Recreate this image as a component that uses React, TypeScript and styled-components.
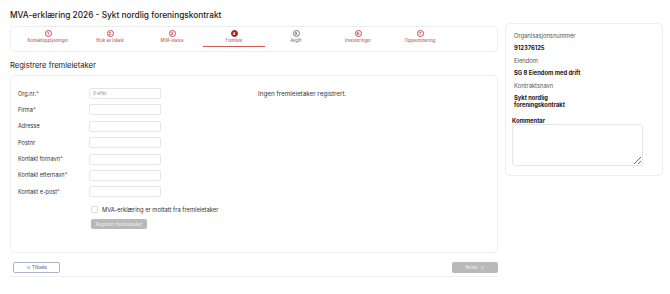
import React from "react";
import styled, { createGlobalStyle } from "styled-components";
import { ChevronsLeft, ChevronsRight } from "lucide-react";

const GlobalStyle = createGlobalStyle`
  body {
    margin: 0;
    background: #ffffff;
    font-family: Inter, "Noto Sans", Arial, sans-serif;
    color: #222;
  }
`;

const Page = styled.div`
  display: flex;
  align-items: flex-start;
  gap: 7px;
  padding: 0 6px 0 10px;
`;

const Main = styled.div`
  flex: 0 0 488px;
  width: 488px;
  padding-top: 9px;
`;

const Title = styled.h1`
  margin: 0;
  font-size: 8.3px;
  line-height: 12px;
  font-weight: 500;
  color: #1c1c1c;
`;

const Stepper = styled.div`
  margin-top: 5px;
  height: 24px;
  border: 1px solid #eeeeee;
  border-radius: 5px;
  display: flex;
  align-items: flex-start;
  padding-left: 6px;
`;

const Step = styled.div<{ $active?: boolean }>`
  width: 62px;
  display: flex;
  flex-direction: column;
  align-items: center;
  padding: 3px 0 2px;
  border-bottom: 1px solid ${(p) => (p.$active ? "#d0574f" : "transparent")};
`;

const Circle = styled.div<{ $active?: boolean; $muted?: boolean }>`
  width: 7px;
  height: 7px;
  border-radius: 50%;
  box-sizing: border-box;
  border: 0.6px solid ${(p) => (p.$muted ? "#777" : p.$active ? "#9e2424" : "#c24848")};
  background: ${(p) => (p.$active ? "#9e2424" : "#fff")};
  color: ${(p) => (p.$active ? "#fff" : p.$muted ? "#555" : "#b73a3a")};
  font-size: 3.8px;
  font-weight: 700;
  display: flex;
  align-items: center;
  justify-content: center;
  margin-bottom: 1px;
`;

const StepLabel = styled.div<{ $muted?: boolean }>`
  font-size: 4.2px;
  line-height: 6px;
  color: ${(p) => (p.$muted ? "#666" : "#b73a3a")};
  white-space: nowrap;
`;

const Heading = styled.h2`
  margin: 8px 0 3px;
  font-size: 7.6px;
  line-height: 12px;
  font-weight: 400;
  color: #222;
`;

const FormCard = styled.div`
  height: 164px;
  border: 1px solid #eeeeee;
  border-radius: 5px;
  padding: 12px 7px 0;
  display: grid;
  grid-template-columns: 240px 1fr;
`;

const Form = styled.div`
  display: flex;
  flex-direction: column;
  gap: 5.4px;
`;

const Row = styled.div`
  display: flex;
  align-items: center;
`;

const Label = styled.label`
  width: 71px;
  font-size: 5.6px;
  color: #333;
`;

const Req = styled.span`
  color: #c0392b;
`;

const Input = styled.input`
  width: 72px;
  height: 11px;
  box-sizing: border-box;
  border: 1px solid #e6e6e6;
  border-radius: 2px;
  padding: 0 3px;
  font-size: 4.2px;
  font-family: inherit;
  &::placeholder {
    color: #888;
  }
`;

const Extras = styled.div`
  margin: 9px 0 0 73px;
  display: flex;
  flex-direction: column;
  align-items: flex-start;
  gap: 6px;
`;

const CheckRow = styled.label`
  display: flex;
  align-items: center;
  gap: 4px;
  font-size: 5.8px;
  color: #333;
`;

const CheckBox = styled.span`
  width: 5px;
  height: 5px;
  border: 0.6px solid #ddd;
  border-radius: 1px;
`;

const GreyButton = styled.button`
  border: none;
  border-radius: 2px;
  background: #b9b9b9;
  color: #f2f2f2;
  font-family: inherit;
  font-size: 4.3px;
  padding: 0 5px;
  height: 10px;
  display: inline-flex;
  align-items: center;
  gap: 2px;
`;

const Message = styled.div`
  font-size: 6.3px;
  color: #333;
  padding-top: 2px;
`;

const Footer = styled.div`
  margin-top: 9px;
  display: flex;
  justify-content: space-between;
  align-items: center;
  padding: 0 0 3px 3px;
  border-bottom: 1px solid #f0f0f0;
`;

const BackButton = styled.button`
  width: 47px;
  height: 11px;
  box-sizing: border-box;
  border: 1px solid #a9b6c9;
  border-radius: 2px;
  background: #fff;
  color: #3d5a86;
  font-family: inherit;
  font-size: 4.5px;
  display: inline-flex;
  align-items: center;
  justify-content: center;
  gap: 1px;
`;

const NextButton = styled(GreyButton)`
  width: 46px;
  height: 11px;
  justify-content: center;
  font-size: 4.6px;
`;

const Sidebar = styled.aside`
  flex: 0 0 158px;
  margin-top: 23px;
  width: 158px;
  height: 153px;
  box-sizing: border-box;
  border: 1px solid #eeeeee;
  border-radius: 5px;
  padding: 8px 0 0 6px;
`;

const Info = styled.div`
  padding-left: 2px;
  max-width: 82px;
`;

const InfoLabel = styled.div`
  font-size: 5.8px;
  line-height: 7px;
  color: #555;
  margin-bottom: 5px;
`;

const InfoValue = styled.div`
  font-size: 5.8px;
  line-height: 7px;
  font-weight: 700;
  color: #1a1a1a;
  margin-bottom: 6px;
`;

const CommentLabel = styled.div`
  margin-top: 9px;
  font-size: 5.8px;
  line-height: 7px;
  font-weight: 700;
  color: #1a1a1a;
`;

const TextArea = styled.textarea`
  display: block;
  width: 131px;
  height: 42px;
  box-sizing: border-box;
  border: 1px solid #e6e6e6;
  border-radius: 3px;
  resize: vertical;
`;

const steps = [
  "Kontaktopplysninger",
  "Bruk av lokale",
  "MVA-status",
  "Fremleie",
  "Avgift",
  "Investeringer",
  "Oppsummering",
];

const fields = [
  { label: "Org.nr.", required: true, placeholder: "9 siffer" },
  { label: "Firma", required: true },
  { label: "Adresse" },
  { label: "Postnr" },
  { label: "Kontakt fornavn", required: true },
  { label: "Kontakt etternavn", required: true },
  { label: "Kontakt e-post", required: true },
];

export default function App() {
  const active = 3;
  return (
    <>
      <GlobalStyle />
      <Page>
        <Main>
          <Title>MVA-erklæring 2026 - Sykt nordlig foreningskontrakt</Title>
          <Stepper>
            {steps.map((s, i) => (
              <Step key={s} $active={i === active}>
                <Circle $active={i === active} $muted={i === 4}>
                  {i + 1}
                </Circle>
                <StepLabel $muted={i === 4}>{s}</StepLabel>
              </Step>
            ))}
          </Stepper>
          <Heading>Registrere fremleietaker</Heading>
          <FormCard>
            <div>
              <Form>
                {fields.map((f) => (
                  <Row key={f.label}>
                    <Label>
                      {f.label}
                      {f.required && <Req>*</Req>}
                    </Label>
                    <Input placeholder={f.placeholder} />
                  </Row>
                ))}
              </Form>
              <Extras>
                <CheckRow>
                  <CheckBox />
                  MVA-erklæring er mottatt fra fremleietaker
                </CheckRow>
                <GreyButton>Registrer fremleietaker</GreyButton>
              </Extras>
            </div>
            <Message>Ingen fremleietaker registrert.</Message>
          </FormCard>
          <Footer>
            <BackButton>
              <ChevronsLeft size={5} strokeWidth={2.5} />
              Tilbake
            </BackButton>
            <NextButton>
              Neste
              <ChevronsRight size={5} strokeWidth={2.5} />
            </NextButton>
          </Footer>
        </Main>
        <Sidebar>
          <Info>
            <InfoLabel>Organisasjonsnummer</InfoLabel>
            <InfoValue>912376125</InfoValue>
            <InfoLabel>Eiendom</InfoLabel>
            <InfoValue>SG 8 Eiendom med drift</InfoValue>
            <InfoLabel>Kontraktsnavn</InfoLabel>
            <InfoValue>Sykt nordlig foreningskontrakt</InfoValue>
          </Info>
          <CommentLabel>Kommentar</CommentLabel>
          <TextArea />
        </Sidebar>
      </Page>
    </>
  );
}
